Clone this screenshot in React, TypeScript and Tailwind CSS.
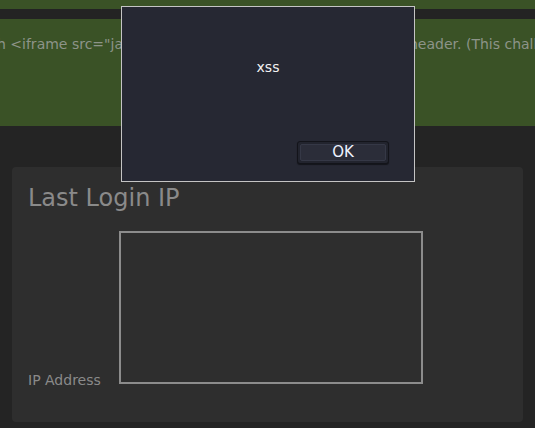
import React from 'react';

const AlertDialog: React.FC<{ message: string }> = ({ message }) => (
    <div className="absolute left-[121px] top-[6px] w-[294px] h-[176px] bg-[#262833] border border-[#c4c4c4] flex flex-col">
        <div className="pt-[51px] h-[134px] text-center text-[14px] leading-[18px] text-[#f2f2f2]">{message}</div>
        <div className="flex justify-end pr-[25px]">
            <button className="w-[92px] h-[23px] rounded-[3px] bg-[#22242e] border border-[#13141a] p-[2px] shadow-[0_1px_1px_rgba(0,0,0,0.5)]">
                <span className="flex items-center justify-center h-full rounded-[2px] border border-[#353846] bg-[#2b2d39] text-[15px] leading-none text-[#eef3ff]">
                    OK
                </span>
            </button>
        </div>
    </div>
);

export default function App() {
    return (
        <div className="relative w-[535px] h-[428px] overflow-hidden bg-[#242424]" style={{ fontFamily: '"DejaVu Sans", "Liberation Sans", sans-serif' }}>
            <div className="h-[9px] bg-[#3a5226]" />
            <div className="h-[10px] bg-[#232323]" />
            <div className="h-[107px] bg-[#3a5226] overflow-hidden pt-[15px]">
                <p className="whitespace-nowrap text-[14px] leading-[20px] text-[#8d9489] -ml-[3px]">
                    h &lt;iframe src="ja
                    <span className="inline-block w-[286px] overflow-hidden align-top">vascript:alert('xss')"&gt; in the X-Forwarded-For </span>
                    header. (This challenge does not require a login)
                </p>
            </div>

            <div className="px-[12px] pt-[41px]">
                <div className="rounded-[4px] bg-[#2e2e2e] pl-4 pr-4 pt-[17px] pb-[38px]">
                    <h2 className="text-[24px] leading-[29px] text-[#8a8a8a]">Last Login IP</h2>
                    <div className="flex items-end mt-[18px]">
                        <label className="w-[91px] text-[14px] leading-[14px] text-[#8a8a8a] -mb-[3px]">IP Address</label>
                        <textarea
                            readOnly
                            className="w-[304px] h-[153px] border-2 border-[#8c8c8c] bg-transparent resize-none outline-none"
                        />
                    </div>
                </div>
            </div>

            <AlertDialog message="xss" />
        </div>
    );
}
